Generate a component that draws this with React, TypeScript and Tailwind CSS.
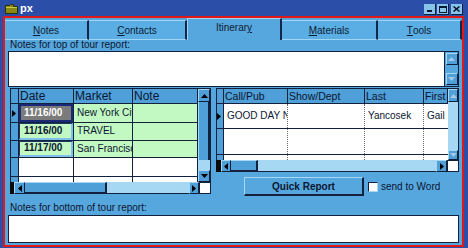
import type { ReactNode } from 'react'

type Dir = 'up' | 'down' | 'left' | 'right'

function Arrow({ dir, color = '#000' }: { dir: Dir; color?: string }) {
  const vertical = dir === 'up' || dir === 'down'
  const w = vertical ? 7 : 4
  const h = vertical ? 4 : 7
  const points = {
    up: '0,4 3.5,0 7,4',
    down: '0,0 3.5,4 7,0',
    left: '4,0 0,3.5 4,7',
    right: '0,0 4,3.5 0,7',
  }[dir]
  return (
    <svg width={w} height={h} viewBox={`0 0 ${w} ${h}`}>
      <polygon points={points} fill={color} />
    </svg>
  )
}

function ScrollButton({ dir, className, color }: { dir: Dir; className: string; color?: string }) {
  return (
    <div
      className={`flex shrink-0 items-center justify-center border border-t-[#a6d8f6] border-l-[#a6d8f6] border-r-[#10203c] border-b-[#10203c] bg-[#4f9fd8] ${className}`}
    >
      <Arrow dir={dir} color={color} />
    </div>
  )
}

function Tab({ className, children }: { className: string; children: ReactNode }) {
  return (
    <div className={`flex shrink-0 items-center justify-center text-[10px] text-[#0d1a33] ${className}`}>
      {children}
    </div>
  )
}

function TitleBar() {
  return (
    <div className="flex h-[16px] items-start bg-[#2b4ea8]">
      <svg className="ml-[5px] mt-[4px]" width="13" height="10" viewBox="0 0 13 10">
        <path d="M0.5 1.5 H4.5 L5.5 0.5 H8.5 V2.5 H12.5 V9.5 H0.5 Z" fill="#8a8a12" stroke="#2e2e05" />
        <path d="M1 3.5 H12" stroke="#c8c850" />
      </svg>
      <span className="ml-[2px] mt-[2px] text-[11px] leading-[12px] font-bold text-white">px</span>
      <div className="ml-auto mr-[5px] mt-[4px] flex">
        <div className="flex h-[11px] w-[12px] items-end justify-center border-r border-b border-[#10203c] bg-[#86c4ec] pb-[2px]">
          <div className="h-[2px] w-[5px] bg-[#0c1630]" />
        </div>
        <div className="ml-[1px] flex h-[11px] w-[12px] items-center justify-center border-r border-b border-[#10203c] bg-[#86c4ec]">
          <div className="h-[7px] w-[8px] border border-t-2 border-[#0c1630]" />
        </div>
        <div className="ml-[2px] flex h-[11px] w-[12px] items-center justify-center border-r border-b border-[#10203c] bg-[#86c4ec]">
          <svg width="7" height="6" viewBox="0 0 7 6">
            <path d="M0.5 0.5 L6.5 5.5 M6.5 0.5 L0.5 5.5" stroke="#0c1630" strokeWidth="1.6" />
          </svg>
        </div>
      </div>
    </div>
  )
}

function Tabs() {
  const inactive =
    'mt-[2px] h-[20px] border-t border-b border-r-2 border-t-[#9fd6f8] border-b-[#9fd6f8] border-r-[#16264a] bg-[#5aaee3]'
  return (
    <div className="flex h-[22px]">
      <Tab className={`w-[84px] ${inactive}`}>
        <span className="underline">N</span>otes
      </Tab>
      <Tab className={`w-[98px] ${inactive}`}>
        <span className="underline">C</span>ontacts
      </Tab>
      <Tab className="h-[22px] w-[95px] border-t border-l border-r-2 border-t-[#9fd6f8] border-l-[#9fd6f8] border-r-[#16264a] bg-[#56a7de] pb-[4px]">
        Itinerar<span className="underline">y</span>
      </Tab>
      <Tab className={`w-[96px] ${inactive}`}>
        <span className="underline">M</span>aterials
      </Tab>
      <Tab className={`w-[84px] ${inactive}`}>
        <span className="underline">T</span>ools
      </Tab>
    </div>
  )
}

const cell = 'shrink-0 overflow-hidden whitespace-nowrap border-r border-[#14213d]'
const headCell = `${cell} bg-[#4f9fd8] text-[12px] leading-[15px] pl-[1px] text-[#0c1630]`

function LeftGrid() {
  const green = 'bg-[#c2f8c2]'
  return (
    <div className="flex h-[106px] w-[201px] shrink-0 flex-col">
      <div className="flex h-[94px]">
        <div className="flex w-[188px] flex-col bg-white">
          <div className="flex h-[16px] border-t border-b border-[#14213d]">
            <div className={`${headCell} w-[9px] border-l`} />
            <div className={`${headCell} w-[55px]`}>Date</div>
            <div className={`${headCell} w-[59px]`}>Market</div>
            <div className={`${headCell} w-[65px]`}>Note</div>
          </div>
          <div className="flex h-[19px] border-b border-[#14213d] text-[10px] text-[#0c1630]">
            <div className={`${cell} flex w-[9px] items-center border-l bg-[#4f9fd8] pl-[1px]`}>
              <Arrow dir="right" />
            </div>
            <div className={`${cell} w-[55px] ${green}`}>
              <div className="h-full border-2 border-[#1a2a78] bg-[#7b7b7b] pl-[3px] font-bold leading-[14px] text-white">
                11/16/00
              </div>
            </div>
            <div className={`${cell} w-[59px] pl-[3px] leading-[18px] ${green}`}>New York City</div>
            <div className={`${cell} w-[65px] ${green}`} />
          </div>
          {[
            { d: '11/16/00', m: 'TRAVEL', h: 'h-[18px]', lh: 'leading-[13px]' },
            { d: '11/17/00', m: 'San Francisco', h: 'h-[17px]', lh: 'leading-[12px]' },
          ].map((r) => (
            <div key={r.m} className={`flex ${r.h} border-b border-[#14213d] text-[10px] text-[#0c1630]`}>
              <div className={`${cell} w-[9px] border-l bg-[#4f9fd8]`} />
              <div className={`${cell} w-[55px] ${green}`}>
                <div
                  className={`h-full border-t border-l border-r-2 border-b-2 border-t-[#1d3560] border-l-[#1d3560] border-r-[#7ec0ea] border-b-[#7ec0ea] pl-[4px] font-bold ${r.lh}`}
                >
                  {r.d}
                </div>
              </div>
              <div className={`${cell} w-[59px] pl-[3px] leading-[16px] ${green}`}>{r.m}</div>
              <div className={`${cell} w-[65px] ${green}`} />
            </div>
          ))}
          <div className="flex h-[19px] border-b border-[#14213d]">
            <div className={`${cell} w-[9px] border-l bg-[#4f9fd8]`} />
            <div className={`${cell} w-[55px]`} />
            <div className={`${cell} w-[59px]`} />
            <div className={`${cell} w-[65px]`} />
          </div>
          <div className="flex h-[5px]">
            <div className={`${cell} w-[9px] border-l bg-[#4f9fd8]`} />
            <div className={`${cell} w-[55px]`} />
            <div className={`${cell} w-[59px]`} />
            <div className={`${cell} w-[65px]`} />
          </div>
        </div>
        <div className="flex w-[13px] flex-col border-t border-r border-[#14213d]">
          <ScrollButton dir="up" className="h-[13px] w-[12px]" />
          <div className="h-[58px] w-[12px] border-l border-r-2 border-l-[#a6d8f6] border-r-[#14213d] bg-[#4f9fd8]" />
          <div className="h-[10px] w-[12px] bg-[#a6d8f4]" />
          <ScrollButton dir="down" className="h-[12px] w-[12px]" />
        </div>
      </div>
      <div className="flex h-[12px]">
        <div className="w-[4px] bg-[#0a0a0a]" />
        <ScrollButton dir="left" className="h-[12px] w-[11px]" />
        <div className="h-[12px] w-[82px] border-t border-b-2 border-r-2 border-t-[#a6d8f6] border-b-[#14213d] border-r-[#14213d] bg-[#4f9fd8]" />
        <div className="h-[12px] w-[82px] border-b border-[#14213d] bg-[#a6d8f4]" />
        <ScrollButton dir="right" className="h-[12px] w-[10px]" />
        <div className="h-[12px] w-[12px] border border-[#14213d] bg-white" />
      </div>
    </div>
  )
}

function RightGrid() {
  const head = `${cell} bg-[#4f9fd8] text-[10.5px] leading-[15px] pl-[1px] text-[#0c1630]`
  const dotted = 'shrink-0 overflow-hidden whitespace-nowrap border-r border-dotted border-[#6a6a6a]'
  const bodyRow = (h: string, content: boolean) => (
    <div className={`flex ${h} border-b border-[#14213d] text-[10px] leading-[24px] text-[#0c1630]`}>
      <div className={`${cell} flex w-[8px] items-center border-l bg-[#4f9fd8]`}>
        {content && <Arrow dir="right" />}
      </div>
      <div className={`${dotted} w-[64px] pl-[3px]`}>{content && 'GOOD DAY NEW YORK'}</div>
      <div className={`${dotted} w-[77px]`} />
      <div className={`${dotted} w-[59px] pl-[3px]`}>{content && 'Yancosek'}</div>
      <div className="w-[24px] shrink-0 overflow-hidden pl-[3px]">{content && 'Gail'}</div>
    </div>
  )
  return (
    <div className="flex h-[84px] w-[243px] flex-col">
      <div className="flex h-[72px]">
        <div className="flex w-[232px] flex-col bg-white">
          <div className="flex h-[16px] border-t border-b border-[#14213d]">
            <div className={`${head} w-[8px] border-l`} />
            <div className={`${head} w-[64px]`}>Call/Pub</div>
            <div className={`${head} w-[77px]`}>Show/Dept</div>
            <div className={`${head} w-[59px]`}>Last</div>
            <div className={`${head} w-[24px]`}>First</div>
          </div>
          {bodyRow('h-[25px]', true)}
          {bodyRow('h-[26px]', false)}
          <div className="flex h-[5px]">
            <div className={`${cell} w-[8px] border-l bg-[#4f9fd8]`} />
            <div className={`${dotted} w-[64px]`} />
            <div className={`${dotted} w-[77px]`} />
            <div className={`${dotted} w-[59px]`} />
          </div>
        </div>
        <div className="flex w-[11px] flex-col border-t border-r border-[#14213d]">
          <ScrollButton dir="up" className="h-[13px] w-[10px]" color="#a6c8e6" />
          <div className="h-[48px] w-[10px] bg-[#a6d8f4]" />
          <ScrollButton dir="down" className="h-[10px] w-[10px]" color="#a6c8e6" />
        </div>
      </div>
      <div className="flex h-[12px]">
        <div className="w-[5px] bg-[#0a0a0a]" />
        <ScrollButton dir="left" className="h-[12px] w-[10px]" />
        <div className="h-[12px] w-[27px] border-t border-b-2 border-r-2 border-t-[#a6d8f6] border-b-[#14213d] border-r-[#14213d] bg-[#4f9fd8]" />
        <div className="h-[12px] w-[178px] border-b border-[#14213d] bg-[#a6d8f4]" />
        <ScrollButton dir="right" className="h-[12px] w-[11px]" />
        <div className="h-[12px] w-[12px] border border-[#14213d] bg-white" />
      </div>
    </div>
  )
}

export default function App() {
  return (
    <div className="h-[248px] w-[468px] overflow-hidden bg-[#2b4ea8] font-['Liberation_Sans',Arial,sans-serif]">
      <TitleBar />
      <div className="ml-[3px] flex h-[231px] w-[461px] flex-col border-2 border-[#e01818] bg-[#56a7de]">
        <Tabs />
        <div className="flex flex-1 flex-col pl-[3px] text-[#0c1630]">
          <div className="ml-[2px] h-[10px] text-[10px] leading-[10px]">Notes for top of tour report:</div>
          <div className="mt-[1px] flex h-[36px] w-[451px] border border-[#14213d] bg-white">
            <div className="flex-1" />
            <div className="flex w-[14px] flex-col items-center justify-between border-l border-[#14213d] bg-[#56a7de] py-[1px]">
              <ScrollButton dir="up" className="h-[12px] w-[12px]" color="#a6c8e6" />
              <ScrollButton dir="down" className="h-[12px] w-[12px]" color="#a6c8e6" />
            </div>
          </div>
          <div className="mt-[1px] flex items-start">
            <div className="ml-[2px]">
              <LeftGrid />
            </div>
            <div className="ml-[5px] flex flex-col">
              <RightGrid />
              <div className="mt-[5px] ml-[28px] flex items-center">
                <div className="flex h-[19px] w-[120px] items-center justify-center border-t border-l border-r-2 border-b-2 border-t-[#a6d8f6] border-l-[#a6d8f6] border-r-[#14213d] border-b-[#14213d] text-[10px] font-bold">
                  Quick Report
                </div>
                <div className="ml-[4px] h-[10px] w-[10px] border border-t-[#14213d] border-l-[#14213d] border-r-[#a6d8f6] border-b-[#a6d8f6] bg-white" />
                <span className="ml-[3px] text-[10px]">send to Word</span>
              </div>
            </div>
          </div>
          <div className="ml-[2px] mt-[7px] h-[10px] text-[10px] leading-[10px]">Notes for bottom of tour report:</div>
          <div className="mt-[2px] h-[28px] w-[451px] border border-[#14213d] bg-white" />
        </div>
      </div>
    </div>
  )
}
